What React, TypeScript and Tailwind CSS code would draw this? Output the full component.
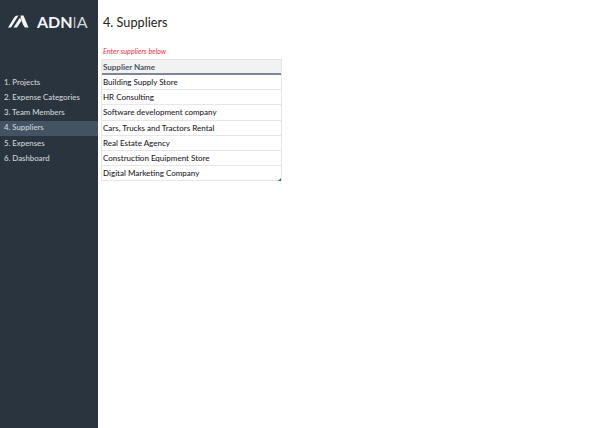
const items = ["1. Projects", "2. Expense Categories", "3. Team Members", "4. Suppliers", "5. Expenses", "6. Dashboard"];
const rows = ["Building Supply Store", "HR Consulting", "Software development company", "Cars, Trucks and Tractors Rental", "Real Estate Agency", "Construction Equipment Store", "Digital Marketing Company"];

function Logo() {
  return (
    <svg width="21" height="13" viewBox="0 0 21 13" className="shrink-0">
      <path d="M0 12.5 L6.5 2 Q7.6 0.5 9.5 0.5 L10.5 0.5 L3 12.5 Z" fill="#f4f5f6" />
      <path d="M5.5 12.5 L12 2.5 L13.6 5.6 L9 12.5 Z" fill="#f4f5f6" />
      <path d="M12.5 0.5 L15.5 0.5 L20.5 12.5 L16.8 12.5 Q13.5 8 12.5 0.5 Z" fill="#f4f5f6" />
    </svg>
  );
}

export default function App() {
  return (
    <div className="flex h-[428px] w-[600px] overflow-hidden bg-white font-['Lato','Liberation_Sans',sans-serif]">
      <aside className="flex w-[98px] shrink-0 flex-col bg-[#2a343e]">
        <div className="flex h-[75px] items-start gap-[8px] pl-[8px] pt-[15px]">
          <Logo />
          <div className="text-[16px] leading-[14px] font-bold text-[#f4f5f6]">
            ADN<span className="font-light">I</span><span className="font-normal text-[#d5d8db]">A</span>
          </div>
        </div>
        <nav className="flex flex-col">
          {items.map((item) => (
            <div
              key={item}
              className={`flex h-[15.2px] items-center pl-[4px] text-[7.8px] font-medium text-[#d0d4d8] ${item === "4. Suppliers" ? "bg-[#435363]" : ""}`}
            >
              {item}
            </div>
          ))}
        </nav>
      </aside>
      <main className="flex flex-col pl-[3px]">
        <h1 className="mt-[13px] ml-[2px] h-[34px] text-[12.7px] leading-[18px] font-normal text-[#222]">4. Suppliers</h1>
        <p className="ml-[2px] h-[12px] text-[7.2px] leading-[10px] italic text-[#f0303c]">Enter suppliers below</p>
        <div className="relative w-[181px] border-x border-[#e6e6e6]">
          <div className="flex h-[16px] items-center border-b-2 border-[#7d8894] border-t border-t-[#e6e6e6] bg-[#f2f2f2] pl-[1px] text-[8px] font-bold text-[#4a5460]">Supplier Name</div>
          {rows.map((row) => (
            <div key={row} className="flex h-[15.2px] items-center border-b border-[#e6e6e6] pl-[1px] text-[8px] font-medium text-[#1f2329]">{row}</div>
          ))}
          <svg width="3" height="3" viewBox="0 0 4 4" className="absolute right-0 bottom-0">
            <path d="M4 0 V4 H0 Z" fill="#3f5bb0" />
          </svg>
        </div>
      </main>
    </div>
  );
}
